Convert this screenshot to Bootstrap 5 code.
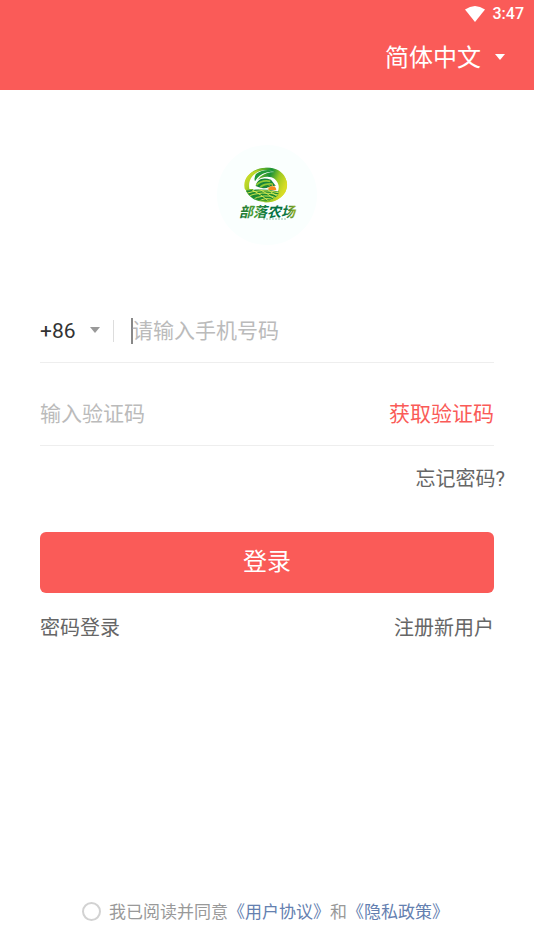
<!DOCTYPE html>
<html lang="zh-CN">
<head>
<meta charset="utf-8">
<meta name="viewport" content="width=device-width, initial-scale=1">
<title>登录</title>
<link href="https://cdn.jsdelivr.net/npm/bootstrap@5.3.0/dist/css/bootstrap.min.css" rel="stylesheet">
<style>
:root { --brand: #fa5b58; --line: #eeeeee; --muted: #bbbbbb; }
body { font-family: Roboto, "Noto Sans CJK SC", sans-serif; background: #fff; color: #666; }
.topbar { background: var(--brand); }
.statusbar { height: 28px; padding-right: 10px; gap: 8px; font-size: 16px; line-height: 28px; }
.langbar { height: 62px; padding: 0 29px 2px 0; }
.plain-select { appearance: none; border: 0; background-color: transparent; background-repeat: no-repeat; background-position: right center; outline: 0; color: inherit; padding: 0; }
.lang-select { font-size: 24px; line-height: 36px; padding-right: 24px; background-image: url("data:image/svg+xml,%3Csvg xmlns='http://www.w3.org/2000/svg' width='10' height='8'%3E%3Cpath d='M0 0h10L5 6z' fill='white'/%3E%3C/svg%3E"); }
.lang-select option { color: #333; }
.code-select { width: 60px; color: #333; font-size: 21px; line-height: 32px; background-image: url("data:image/svg+xml,%3Csvg xmlns='http://www.w3.org/2000/svg' width='10' height='8'%3E%3Cpath d='M0 0h10L5 6z' fill='%23999'/%3E%3C/svg%3E"); }
.form-area { padding: 0 40px; }
.logo { width: 102px; height: 102px; margin: 54px auto 54px; }
.field-row { height: 63px; border-bottom: 1px solid var(--line); }
.field-row + .field-row { margin-top: 20px; }
.separator { width: 1px; height: 22px; background: #ddd; margin: 0 17px 0 13px; }
.caret { width: 2px; height: 26px; margin-right: -1px; background: #888; }
.field-input { border: 0; outline: 0; padding: 0; background: transparent; font-size: 21px; line-height: 32px; min-width: 0; color: #333; }
.field-input::placeholder { color: var(--muted); opacity: 1; }
.get-code { color: var(--brand); font-size: 21px; line-height: 32px; }
.side-link { color: #666; font-size: 20px; line-height: 30px; }
.forgot-row { padding: 18px 29px 0 0; }
.login-btn, .login-btn:hover { background: var(--brand); color: #fff; border: 0; border-radius: 6px; height: 61px; margin-top: 38px; font-size: 24px; line-height: 36px; padding: 0 0 2px; }
.agree { font-size: 17px; line-height: 26px; color: #999; padding-bottom: 24px; padding-right: 3px; }
.agree a { color: #6480b0; font-family: "Noto Sans CJK SC", sans-serif; }
.agree-check { appearance: none; width: 19px; height: 19px; border: 2px solid #d2d2d2; border-radius: 50%; margin: 0 8px 0 0; flex: none; }
.agree-check:checked { background: var(--brand); border-color: var(--brand); }
</style>
</head>
<body class="d-flex flex-column min-vh-100">
<header class="topbar text-white">
  <div class="statusbar d-flex align-items-center justify-content-end fw-medium">
    <svg width="20" height="16" viewBox="0 0 20 16" aria-hidden="true"><path d="M0 3.500Q10-3.500 20 3.500L10 16z" fill="#fff"/></svg>
    <span>3:47</span>
  </div>
  <div class="langbar d-flex align-items-center justify-content-end">
    <select class="plain-select lang-select" aria-label="语言"><option>简体中文</option></select>
  </div>
</header>
<main class="flex-grow-1">
  <svg class="logo d-block" viewBox="0 0 102 102" role="img" aria-label="部落农场">
    <defs>
      <linearGradient id="ring" x1="0" y1="0" x2="1" y2="0.400"><stop offset="0" stop-color="#d3dc22"/><stop offset=".25" stop-color="#6fb526"/><stop offset=".5" stop-color="#159038"/><stop offset=".75" stop-color="#9dc923"/><stop offset="1" stop-color="#d8dc25"/></linearGradient>
      <linearGradient id="sweep" x1="0" y1="0" x2="1" y2="1"><stop offset="0" stop-color="#e0e22d"/><stop offset=".5" stop-color="#b3d326"/><stop offset="1" stop-color="#2d9a31"/></linearGradient>
      <linearGradient id="ink" x1="0" y1="0" x2="1" y2="0"><stop offset="0" stop-color="#0b6b3a"/><stop offset=".25" stop-color="#4c9f32"/><stop offset=".5" stop-color="#087341"/><stop offset=".8" stop-color="#087341"/><stop offset="1" stop-color="#b2bd20"/></linearGradient>
      <clipPath id="field"><path d="M18 77Q60 68 118 80Q113 100 85 107Q38 110 18 77z"/></clipPath>
    </defs>
    <circle cx="51" cy="51" r="50" fill="#fafffe"/>
    <g transform="translate(24 21) scale(.333)">
      <ellipse cx="78" cy="60" rx="60" ry="48" fill="#fff" stroke="url(#ring)" stroke-width="7"/>
      <path d="M45 19C70 3 113 4 132 31C151 61 139 94 104 108C93 112 79 113 70 111C100 102 119 84 116 62C112 39 88 29 63 39C49 44 43 53 42 60C36 47 37 34 45 19z" fill="url(#ring)"/>
      <path d="M14 71C8 38 33 17 58 16C37 29 31 48 40 75L20 77z" fill="url(#sweep)"/>
      <path d="M28 72C24 48 35 28 58 19C77 12 91 14 103 21C69 21 47 41 42 72z" fill="#fff"/>
      <path d="M48 27Q74 8 107 19Q77 20 59 32Q49 40 45 49Q41 39 48 27z" fill="#22983a"/>
      <path d="M47 63C52 43 67 35 93 44L107 62C90 61 81 74 66 69Q57 67 47 63z" fill="#19853a"/>
      <path d="M49 61Q64 44 91 49M61 66Q75 55 98 57" fill="none" stroke="#8fcb35" stroke-width="5"/>
      <path d="M85 76a12 12 0 0 1 24 0z" fill="#f58a20"/>
      <path d="M82 68l5 2M87 61l4 4M97 58v5M107 61l-4 4" stroke="#f5b73c" stroke-width="3"/>
      <g clip-path="url(#field)"><path d="M12 68h112v44H12z" fill="#1d8a32"/><path d="M12 87Q65 69 119 84M18 96Q65 75 119 91M30 107Q75 82 113 100M50 113Q80 91 105 108M32 72L62 90L91 112M57 72L84 88L106 104M83 74L116 97" fill="none" stroke="#d1e650" stroke-width="3"/></g>
    </g>
    <text x="23" y="73" font-family="'Noto Sans CJK SC', sans-serif" font-size="14" font-style="italic" font-weight="700" fill="url(#ink)">部落农场</text>
    <path d="M47 75h24" stroke="#32865a" stroke-width=".7" stroke-dasharray="2 1" opacity=".7"/>
  </svg>
  <form id="login" class="form-area">
    <div class="field-row d-flex align-items-center">
      <select class="plain-select code-select" aria-label="国家区号"><option>+86</option></select>
      <span class="separator"></span>
      <span class="caret"></span>
      <input class="field-input flex-grow-1" type="tel" placeholder="请输入手机号码" aria-label="手机号码">
    </div>
    <div class="field-row d-flex align-items-center">
      <input class="field-input flex-grow-1" type="text" placeholder="输入验证码" aria-label="验证码">
      <button type="button" class="btn p-0 border-0 get-code">获取验证码</button>
    </div>
  </form>
  <div class="forgot-row d-flex justify-content-end">
    <a href="#" class="side-link text-decoration-none">忘记密码?</a>
  </div>
  <div class="form-area">
    <button type="submit" form="login" class="btn login-btn w-100 d-block">登录</button>
    <div class="d-flex justify-content-between mt-3 pt-1">
      <a href="#" class="side-link text-decoration-none">密码登录</a>
      <a href="#" class="side-link text-decoration-none">注册新用户</a>
    </div>
  </div>
</main>
<footer class="agree d-flex align-items-center justify-content-center">
  <input class="agree-check" type="checkbox" id="agree">
  <div><label for="agree">我已阅读并同意</label><a href="#" class="text-decoration-none">《用户协议》</a>和<a href="#" class="text-decoration-none">《隐私政策》</a></div>
</footer>
<script src="https://cdn.jsdelivr.net/npm/bootstrap@5.3.0/dist/js/bootstrap.bundle.min.js"></script>
</body>
</html>
